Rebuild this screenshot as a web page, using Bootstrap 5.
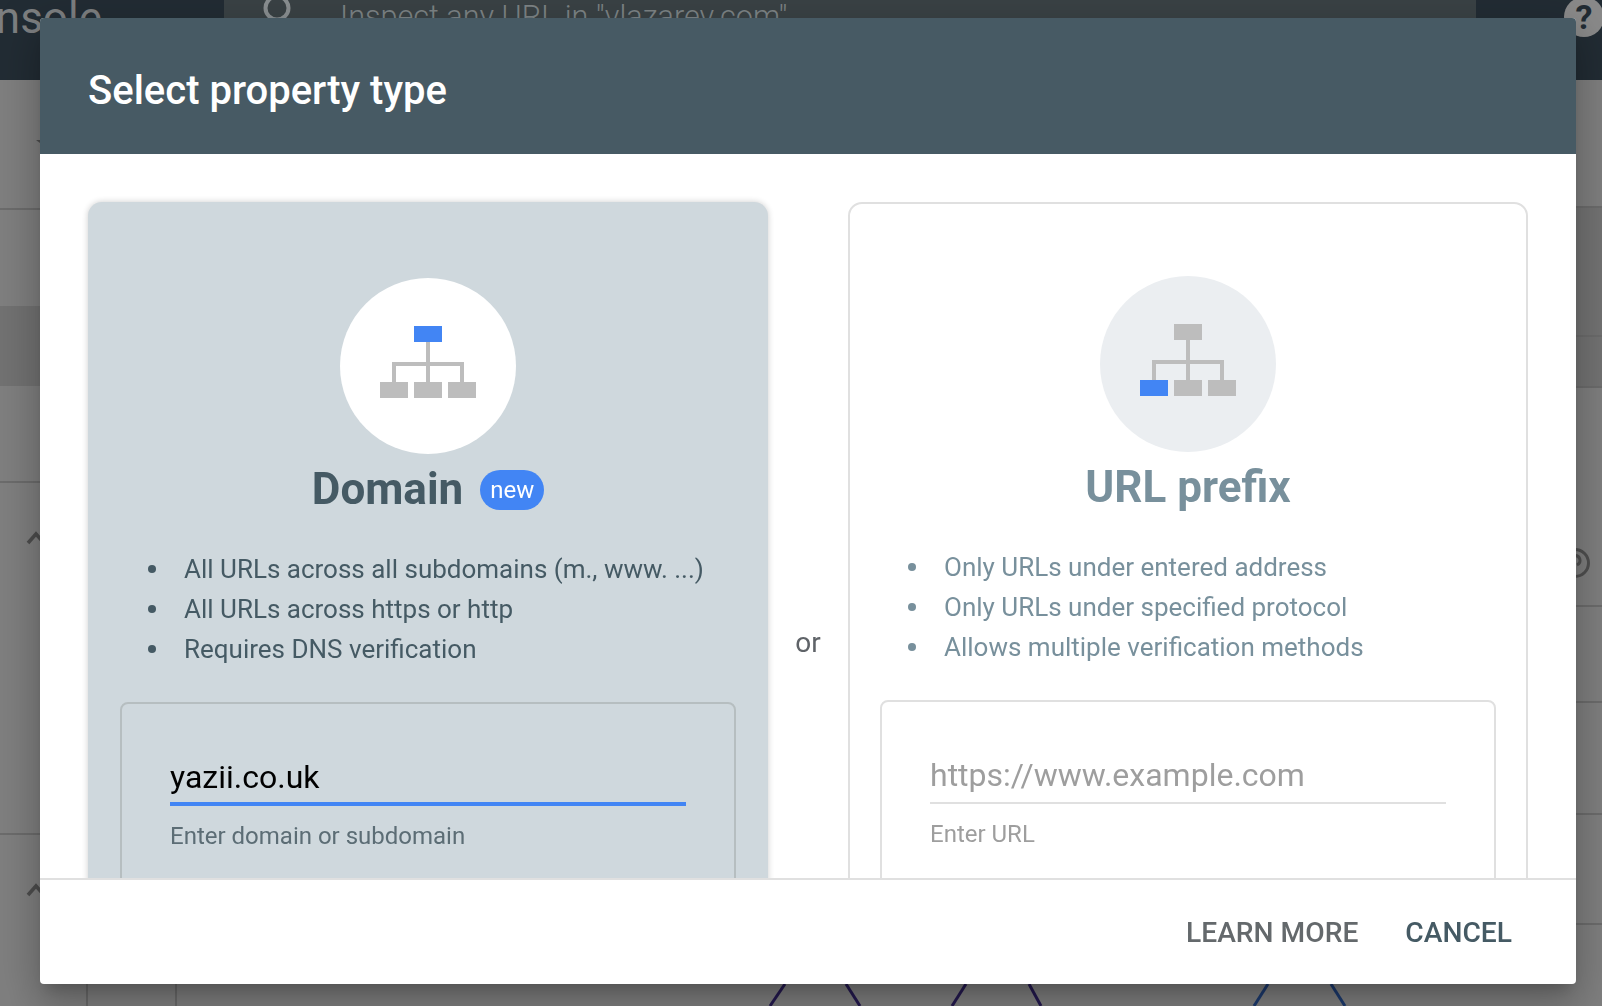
<!DOCTYPE html>
<html lang="en">
<head>
  <meta charset="UTF-8" />
  <meta name="viewport" content="width=device-width, initial-scale=1.0" />
  <title>Select property type</title>
  <link href="https://cdn.jsdelivr.net/npm/bootstrap@5.3.2/dist/css/bootstrap.min.css" rel="stylesheet" />

  <style>
    body {
      background-color: #7f7f7f;
      font-family: Roboto, "Liberation Sans", sans-serif;
      overflow: hidden;
    }

    .page {
      height: 100vh;
    }

    /* page behind the dialog */
    .topbar {
      height: 80px;
      background-color: #222c34;
      overflow: hidden;
      flex: none;
    }

    .brand {
      width: 224px;
      padding-right: 122px;
      color: #7d7f81;
      font-size: 44px;
      line-height: 44px;
      white-space: nowrap;
      margin-top: -4px;
    }

    .search {
      background-color: #3a4245;
      color: #7d8486;
      padding-left: 39px;
      gap: 49px;
      font-size: 30.6px;
      font-weight: 300;
      line-height: 36px;
    }

    .search svg {
      margin-top: -6px;
    }

    .search span {
      margin-top: -1px;
    }

    .help {
      width: 40px;
      height: 40px;
      margin-top: -3px;
      margin-left: 88px;
      margin-right: -2px;
      background-color: #8a8a8a;
      color: #222c34;
      font-size: 34px;
      font-weight: 700;
      line-height: 40px;
      text-align: center;
    }

    .rail-left {
      width: 40px;
    }

    .rail-right {
      width: 26px;
    }

    .rail-left > div,
    .rail-right > div {
      border-bottom: 2px solid #6c6c6c;
    }

    .rail-left > div:last-child,
    .rail-right > div:last-child {
      border-bottom: 0;
    }

    .caret {
      margin-left: 36px;
      margin-top: 60px;
      display: block;
    }

    .chevron {
      margin-left: 27px;
      margin-top: 49px;
      display: block;
      overflow: visible;
    }

    .band {
      background-color: #727272;
      border-bottom: 0 !important;
    }

    .shade {
      background-color: #737373;
    }

    .ring {
      margin-left: -16px;
      margin-top: 160px;
      display: block;
      overflow: visible;
    }

    .chart-strip {
      height: 22px;
      display: block;
    }

    /* dialog */
    .property-dialog {
      position: fixed;
      top: 18px;
      left: 40px;
      width: 1536px;
      height: 966px;
      background-color: #fff;
      border-radius: 4px;
      z-index: 10;
      box-shadow: 0 24px 38px 3px rgba(0, 0, 0, 0.14), 0 9px 46px 8px rgba(0, 0, 0, 0.12), 0 11px 15px -7px rgba(0, 0, 0, 0.2);
    }

    .dialog-head {
      height: 136px;
      padding: 10px 0 0 48px;
      background-color: #475a64;
      color: #fff;
      border-radius: 4px 4px 0 0;
      flex: none;
    }

    .dialog-head h1 {
      font-size: 40px;
      font-weight: 500;
      margin: 0;
    }

    .dialog-body {
      padding: 48px 48px 0;
      overflow: hidden;
      min-height: 0;
    }

    .dialog-foot {
      height: 106px;
      border-top: 2px solid #e0e0e0;
      padding: 2px 47px 0 0;
      flex: none;
    }

    .foot-btn {
      font-size: 28.2px;
      font-weight: 500;
      line-height: 36px;
      padding: 8px 17px;
      border: 0;
      color: #64696c;
    }

    .foot-btn.cancel {
      margin-left: 13px;
      color: #455a64;
    }

    .or-col {
      width: 80px;
      color: #5f6368;
      font-size: 28px;
      padding-top: 420px;
    }

    .prop-card {
      width: 680px;
      border-radius: 14px;
      height: 800px;
      border: 0;
    }

    .prop-card.active {
      background-color: #cfd8dd;
      color: #455a64;
      padding-top: 76px;
      box-shadow: 0 0 6px rgba(0, 0, 0, 0.2);
    }

    .prop-card.idle {
      background-color: #fff;
      color: #78909c;
      padding-top: 72px;
      border: 2px solid #e0e0e0;
    }

    .disc {
      width: 176px;
      height: 176px;
      padding-bottom: 8px;
      background-color: #fff;
    }

    .idle .disc {
      background-color: #ebeef1;
    }

    .prop-title {
      height: 56px;
      margin-top: 7px;
      margin-bottom: 1px;
      gap: 17px;
    }

    .prop-title h2 {
      font-size: 44px;
      font-weight: 700;
      line-height: 56px;
      margin: 0;
    }

    .new-pill {
      width: 64px;
      height: 40px;
      margin-top: 2px;
      background-color: #4285f4;
      color: #fff;
      font-size: 24px;
      font-weight: 400;
      line-height: 40px;
      padding: 0;
    }

    .prop-list {
      margin: 31px 0 33px;
      padding-left: 96px;
      font-size: 26px;
      line-height: 40px;
      list-style: none;
    }

    .idle .prop-list {
      padding-left: 94px;
    }

    .prop-list li {
      display: flex;
      align-items: center;
      margin-left: -36.5px;
    }

    .prop-list li::before {
      content: "";
      width: 8px;
      height: 8px;
      margin-right: 28.5px;
      border-radius: 50%;
      background-color: currentColor;
      flex: none;
    }

    .input-box {
      margin: 0 32px;
      height: 300px;
      padding: 44px 48px 0;
      border: 2px solid #b6bec0;
      border-radius: 8px;
    }

    .idle .input-box {
      margin: 0 30px;
      border-color: #e0e0e0;
    }

    .domain-input.form-control {
      height: 58px;
      padding: 4px 0 0;
      background-color: transparent;
      border: 0;
      border-bottom: 4px solid #4285f4;
      border-radius: 0;
      color: #000;
      font-size: 32px;
      box-shadow: none;
    }

    .idle .domain-input.form-control {
      padding-top: 2px;
      border-bottom: 2px solid #e0e0e0;
    }

    .domain-input::placeholder {
      color: #9e9e9e;
      opacity: 1;
    }

    .hint {
      margin-top: 14px;
      font-size: 24px;
      line-height: 32px;
      color: #5c6d75;
    }

    .idle .hint {
      color: #9e9e9e;
    }
  </style>
</head>
<body>
  <!-- Page behind the dialog -->
  <div class="page d-flex flex-column">
    <div class="topbar d-flex">
      <div class="brand d-flex justify-content-end flex-shrink-0"><span>Google Search Console</span></div>
      <div class="search d-flex flex-grow-1">
        <svg width="28" height="30" viewBox="0 0 28 30"><circle cx="14" cy="14" r="11.5" fill="none" stroke="#8a8f91" stroke-width="4" /></svg>
        <span>Inspect any URL in "vlazarev.com"</span>
      </div>
      <div class="help rounded-circle flex-shrink-0">?</div>
    </div>

    <div class="d-flex flex-grow-1">
      <div class="rail-left d-flex flex-column flex-shrink-0">
        <div style="height: 130px">
          <svg class="caret" width="8" height="6" viewBox="0 0 8 6"><path d="M0 0H8V6Z" fill="#4d4d4d" /></svg>
        </div>
        <div class="border-0" style="height: 96px"></div>
        <div class="band" style="height: 80px"></div>
        <div style="height: 97px"></div>
        <div style="height: 352px">
          <svg class="chevron" width="18" height="12" viewBox="0 0 18 12"><path d="M1 11L9 2L17 11" fill="none" stroke="#4d4d4d" stroke-width="3.5" /></svg>
        </div>
        <div class="flex-grow-1">
          <svg class="chevron" width="18" height="12" viewBox="0 0 18 12"><path d="M1 11L9 2L17 11" fill="none" stroke="#4d4d4d" stroke-width="3.5" /></svg>
        </div>
      </div>

      <div class="flex-grow-1 d-flex flex-column justify-content-end">
        <svg class="chart-strip" width="1536" height="22" viewBox="0 0 1536 22">
          <g stroke="#565656" stroke-width="1">
            <path d="M47 0V22" />
            <path d="M136 0V22" />
          </g>
          <g fill="none" stroke="#24194f" stroke-width="3">
            <path d="M745 0L730 22" />
            <path d="M806 0L820 22" />
            <path d="M926 0L912 22" />
            <path d="M989 0L1001 22" />
          </g>
          <g fill="none" stroke="#1c3a6e" stroke-width="3">
            <path d="M1228 0L1214 22" />
            <path d="M1291 0L1305 22" />
          </g>
        </svg>
      </div>

      <div class="rail-right d-flex flex-column flex-shrink-0">
        <div style="height: 128px"></div>
        <div class="shade" style="height: 129px"></div>
        <div class="shade" style="height: 51px"></div>
        <div style="height: 219px">
          <svg class="ring" width="30" height="30" viewBox="0 0 30 30">
            <circle cx="15" cy="15" r="13.5" fill="none" stroke="#505050" stroke-width="3" />
            <path d="M10 12a5 5 0 1 1 7 5" fill="none" stroke="#505050" stroke-width="3" />
          </svg>
        </div>
        <div style="height: 96px"></div>
        <div style="height: 112px"></div>
        <div style="height: 110px"></div>
        <div class="flex-grow-1"></div>
      </div>
    </div>
  </div>

  <!-- Dialog -->
  <div class="property-dialog d-flex flex-column">
    <div class="dialog-head d-flex align-items-center">
      <h1>Select property type</h1>
    </div>

    <div class="dialog-body d-flex flex-grow-1">
      <div class="prop-card active card flex-shrink-0">
        <div class="disc rounded-circle d-flex align-items-center justify-content-center mx-auto">
          <svg width="96" height="72" viewBox="0 0 96 72">
            <path d="M46 16H50V36H84V56H80V40H50V56H46V40H16V56H12V36H46Z" fill="#bdbdbd" />
            <rect x="34" y="0" width="28" height="16" fill="#4285f4" />
            <rect x="0" y="56" width="28" height="16" fill="#bdbdbd" />
            <rect x="34" y="56" width="28" height="16" fill="#bdbdbd" />
            <rect x="68" y="56" width="28" height="16" fill="#bdbdbd" />
          </svg>
        </div>
        <div class="prop-title d-flex align-items-center justify-content-center">
          <h2>Domain</h2>
          <span class="badge rounded-pill new-pill">new</span>
        </div>
        <ul class="prop-list">
          <li>All URLs across all subdomains (m., www. ...)</li>
          <li>All URLs across https or http</li>
          <li>Requires DNS verification</li>
        </ul>
        <div class="input-box">
          <input type="text" class="form-control domain-input" value="yazii.co.uk" />
          <div class="hint">Enter domain or subdomain</div>
        </div>
      </div>

      <div class="or-col text-center flex-shrink-0">or</div>

      <div class="prop-card idle card flex-shrink-0">
        <div class="disc rounded-circle d-flex align-items-center justify-content-center mx-auto">
          <svg width="96" height="72" viewBox="0 0 96 72">
            <path d="M46 16H50V36H84V56H80V40H50V56H46V40H16V56H12V36H46Z" fill="#bdbdbd" />
            <rect x="34" y="0" width="28" height="16" fill="#bdbdbd" />
            <rect x="0" y="56" width="28" height="16" fill="#4285f4" />
            <rect x="34" y="56" width="28" height="16" fill="#bdbdbd" />
            <rect x="68" y="56" width="28" height="16" fill="#bdbdbd" />
          </svg>
        </div>
        <div class="prop-title d-flex align-items-center justify-content-center">
          <h2>URL prefix</h2>
        </div>
        <ul class="prop-list">
          <li>Only URLs under entered address</li>
          <li>Only URLs under specified protocol</li>
          <li>Allows multiple verification methods</li>
        </ul>
        <div class="input-box">
          <input type="text" class="form-control domain-input" placeholder="https://www.example.com" />
          <div class="hint">Enter URL</div>
        </div>
      </div>
    </div>

    <div class="dialog-foot d-flex align-items-center justify-content-end">
      <button type="button" class="btn foot-btn">LEARN MORE</button>
      <button type="button" class="btn foot-btn cancel">CANCEL</button>
    </div>
  </div>

  <script src="https://cdn.jsdelivr.net/npm/bootstrap@5.3.2/dist/js/bootstrap.bundle.min.js"></script>
</body>
</html>
